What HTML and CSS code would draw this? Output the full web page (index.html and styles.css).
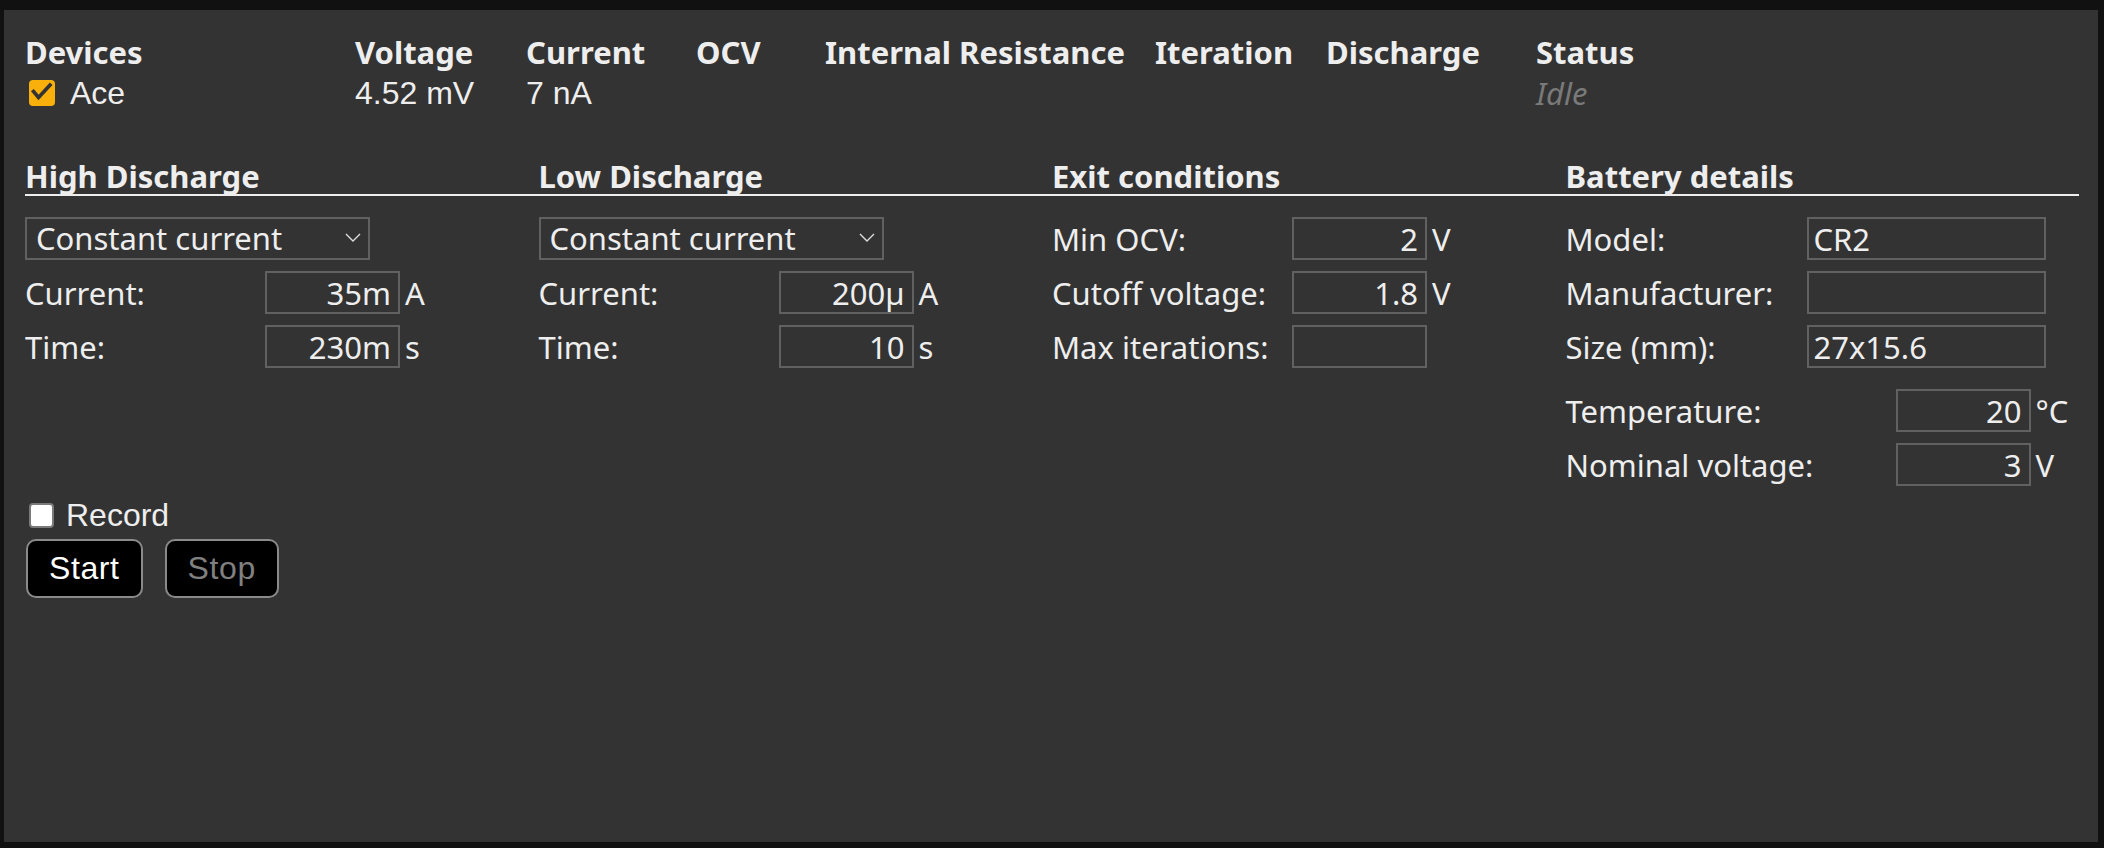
FILE: index.html
```html
<!DOCTYPE html>
<html lang="en">
<head>
<meta charset="utf-8">
<title>Battery tester</title>
<link rel="stylesheet" href="styles.css">
</head>
<body>
<div class="panel">
  <div class="status-grid">
    <div class="th">Devices</div>
    <div class="th">Voltage</div>
    <div class="th">Current</div>
    <div class="th">OCV</div>
    <div class="th">Internal Resistance</div>
    <div class="th">Iteration</div>
    <div class="th">Discharge</div>
    <div class="th">Status</div>

    <div class="td device">
      <span class="check-on">
        <svg viewBox="0 0 26 26" width="26" height="26"><path d="M4.5 11.5 L9.5 17.5 L21 5" fill="none" stroke="#333" stroke-width="3.6" stroke-linecap="square" stroke-linejoin="miter"/></svg>
      </span>
      <span>Ace</span>
    </div>
    <div class="td">4.52 mV</div>
    <div class="td">7 nA</div>
    <div class="td"></div>
    <div class="td"></div>
    <div class="td"></div>
    <div class="td"></div>
    <div class="td idle">Idle</div>
  </div>

  <div class="sections">
    <div class="section">
      <h2 class="sec-title">High Discharge</h2>
      <div class="sec-body">
        <div class="select-wrap">
          <select class="select"><option>Constant current</option></select>
          <svg class="chev" viewBox="0 0 16 9" width="16" height="9"><path d="M1 1 L8 8 L15 1" fill="none" stroke="#ddd" stroke-width="1.4"/></svg>
        </div>
        <div class="row"><span class="label">Current:</span><input class="field num" type="text" value="35m"><span class="unit">A</span></div>
        <div class="row"><span class="label">Time:</span><input class="field num" type="text" value="230m"><span class="unit">s</span></div>
      </div>
    </div>

    <div class="section">
      <h2 class="sec-title">Low Discharge</h2>
      <div class="sec-body">
        <div class="select-wrap">
          <select class="select"><option>Constant current</option></select>
          <svg class="chev" viewBox="0 0 16 9" width="16" height="9"><path d="M1 1 L8 8 L15 1" fill="none" stroke="#ddd" stroke-width="1.4"/></svg>
        </div>
        <div class="row"><span class="label">Current:</span><input class="field num" type="text" value="200µ"><span class="unit">A</span></div>
        <div class="row"><span class="label">Time:</span><input class="field num" type="text" value="10"><span class="unit">s</span></div>
      </div>
    </div>

    <div class="section">
      <h2 class="sec-title">Exit conditions</h2>
      <div class="sec-body">
        <div class="row"><span class="label">Min OCV:</span><input class="field num" type="text" value="2"><span class="unit">V</span></div>
        <div class="row"><span class="label">Cutoff voltage:</span><input class="field num" type="text" value="1.8"><span class="unit">V</span></div>
        <div class="row"><span class="label">Max iterations:</span><input class="field num" type="text" value=""></div>
      </div>
    </div>

    <div class="section">
      <h2 class="sec-title">Battery details</h2>
      <div class="sec-body">
        <div class="row"><span class="label label-b">Model:</span><input class="field wide" type="text" value="CR2"></div>
        <div class="row"><span class="label label-b">Manufacturer:</span><input class="field wide" type="text" value=""></div>
        <div class="row"><span class="label label-b">Size (mm):</span><input class="field wide" type="text" value="27x15.6"></div>
        <div class="sub-group">
          <div class="row"><span class="label label-t">Temperature:</span><input class="field num" type="text" value="20"><span class="unit">°C</span></div>
          <div class="row"><span class="label label-t">Nominal voltage:</span><input class="field num" type="text" value="3"><span class="unit">V</span></div>
        </div>
      </div>
    </div>
  </div>

  <div class="record">
    <span class="check-off"></span>
    <span>Record</span>
  </div>
  <div class="actions">
    <button class="btn">Start</button>
    <button class="btn btn-disabled">Stop</button>
  </div>
</div>
</body>
</html>
```

FILE: styles.css
```css
html, body {
  margin: 0;
  padding: 0;
  background: #111111;
}

body {
  padding: 10px 6px 6px 4px;
}

.panel {
  height: 832px;
  box-sizing: border-box;
  background: #333333;
  padding: 22px 19px 0 21px;
  color: #eeeeee;
  font-family: "Noto Sans", "Liberation Sans", sans-serif;
}

.status-grid {
  display: grid;
  grid-template-columns: 330px 171px 170px 129px 330px 171px 210px 1fr;
  grid-template-rows: 41px 40px;
}

.th {
  font-family: "Noto Sans", sans-serif;
  font-weight: 700;
  font-size: 31px;
  line-height: 41px;
  white-space: nowrap;
}

.td {
  font-family: "Liberation Sans", Arial, sans-serif;
  font-size: 32px;
  line-height: 40px;
  white-space: nowrap;
}

.device {
  display: flex;
  align-items: center;
}

.check-on {
  width: 26px;
  height: 26px;
  border-radius: 4px;
  background: #f9b00a;
  margin-left: 4px;
  margin-right: 15px;
  display: flex;
}

.idle {
  font-family: "Noto Sans", sans-serif;
  font-style: italic;
  font-size: 31px;
  color: #7a7a7a;
}

.sections {
  display: grid;
  grid-template-columns: repeat(4, 1fr);
  margin-top: 45px;
}

.sec-title {
  margin: 0;
  font-family: "Noto Sans", sans-serif;
  font-weight: 700;
  font-size: 31px;
  line-height: 36px;
  border-bottom: 2px solid #eeeeee;
  white-space: nowrap;
}

.sec-body {
  display: flex;
  flex-direction: column;
  gap: 11px;
  margin-top: 21px;
}

.select-wrap {
  position: relative;
  width: 345px;
  height: 43px;
}

.select {
  appearance: none;
  -webkit-appearance: none;
  width: 100%;
  height: 100%;
  box-sizing: border-box;
  margin: 0;
  background: transparent;
  border: 2px solid #616161;
  border-radius: 0;
  color: #eeeeee;
  font-family: "Noto Sans", sans-serif;
  font-size: 31px;
  line-height: 39px;
  padding: 0 0 2px 9px;
  outline: none;
}

.chev {
  position: absolute;
  left: 320px;
  top: 16px;
}

.row {
  display: flex;
  align-items: center;
  height: 43px;
}

.label {
  width: 240px;
  flex: none;
  font-size: 31px;
  white-space: nowrap;
}

.label-b {
  width: 241px;
}

.label-t {
  width: 330px;
}

.field {
  box-sizing: border-box;
  height: 43px;
  margin: 0;
  background: transparent;
  border: 2px solid #616161;
  border-radius: 0;
  color: #eeeeee;
  font-family: "Noto Sans", sans-serif;
  font-size: 31px;
  outline: none;
}

.num {
  width: 135px;
  text-align: right;
  padding: 0 7px 0 4px;
}

.wide {
  width: 239px;
  text-align: left;
  padding: 0 4px 0 5px;
}

.unit {
  margin-left: 5px;
  font-size: 31px;
}

.sub-group {
  display: flex;
  flex-direction: column;
  gap: 11px;
  margin-top: 10px;
}

.record {
  display: flex;
  align-items: center;
  margin-top: 9px;
  height: 40px;
  font-family: "Liberation Sans", Arial, sans-serif;
  font-size: 32px;
}

.check-off {
  width: 25px;
  height: 25px;
  box-sizing: border-box;
  border: 2px solid #7a7a7a;
  border-radius: 4px;
  background: #ffffff;
  margin-left: 4px;
  margin-right: 12px;
}

.actions {
  display: flex;
  gap: 22px;
  margin-top: 4px;
  padding-left: 1px;
}

.btn {
  height: 59px;
  margin: 0;
  padding: 0 21px;
  background: #000000;
  color: #ffffff;
  border: 2px solid #8a8a8a;
  border-radius: 10px;
  font-family: "Liberation Sans", Arial, sans-serif;
  font-size: 32px;
  letter-spacing: 0.6px;
}

.btn-disabled {
  color: #808080;
}
```
